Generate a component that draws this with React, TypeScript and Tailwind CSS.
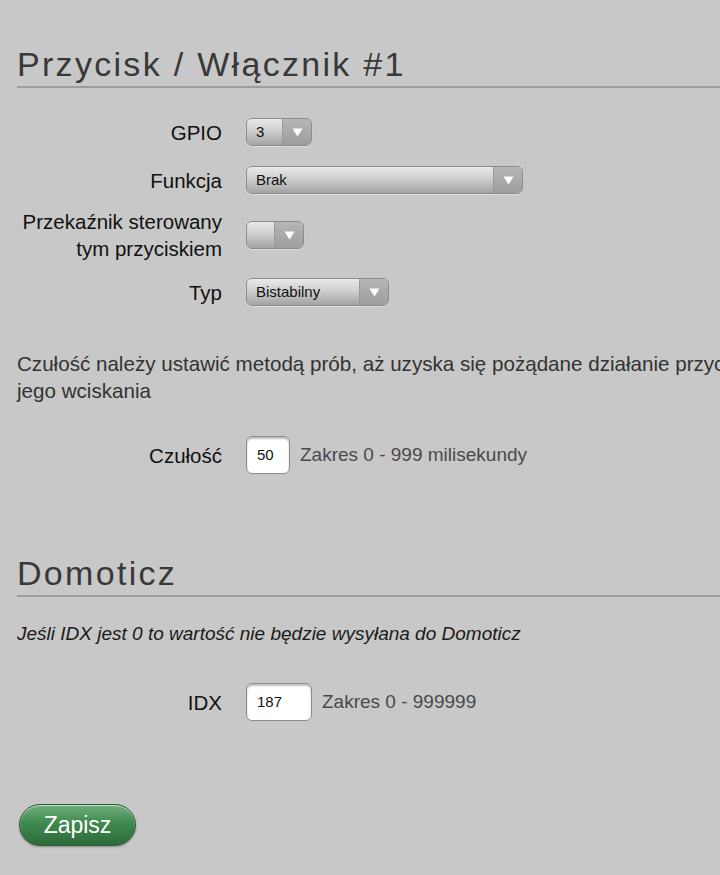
import type { ReactNode } from 'react'

const font = "font-['Liberation_Sans','Helvetica',Arial,sans-serif]"

function Heading({ children }: { children: ReactNode }) {
  return (
    <h2 className="border-b-2 border-[#9d9d9d] pb-[2px] text-[34px] leading-[40px] tracking-[2.3px] text-[#383838]">
      {children}
    </h2>
  )
}

function Arrow() {
  return (
    <svg width="11" height="9" viewBox="0 0 11 9">
      <polygon points="0.5,0.5 10.5,0.5 5.5,8.5" fill="#ffffff" />
    </svg>
  )
}

function Select({ width, value }: { width: string; value: string }) {
  return (
    <div
      className={`${width} flex h-[28px] overflow-hidden rounded-[6px] border border-[#8b8b8b] shadow-[0_1px_1px_rgba(255,255,255,0.4)]`}
    >
      <div className="flex flex-1 items-center bg-[linear-gradient(to_bottom,#eaeaea_0%,#cfcfcf_45%,#a3a3a3_100%)] pl-[9px] text-[15px] text-[#111]">
        {value}
      </div>
      <div className="flex w-[29px] items-center justify-center border-l border-[#9a9a9a] bg-[linear-gradient(to_bottom,#b6b6b6,#9d9d9d)]">
        <Arrow />
      </div>
    </div>
  )
}

function Input({ width, value }: { width: string; value: string }) {
  return (
    <div
      className={`${width} flex h-[38px] items-center rounded-[6px] border border-[#8d8d8d] bg-white pl-[10px] text-[15px] text-[#111] shadow-[inset_0_2px_2px_rgba(0,0,0,0.25)]`}
    >
      {value}
    </div>
  )
}

function Row({ label, children, className = '' }: { label: ReactNode; children: ReactNode; className?: string }) {
  return (
    <div className={`flex items-center ${className}`}>
      <div className="w-[205px] text-right text-[20.5px] leading-[27px] text-[#111]">{label}</div>
      <div className="ml-[24px] flex items-center">{children}</div>
    </div>
  )
}

export default function App() {
  return (
    <div className={`${font} h-[875px] w-[720px] overflow-hidden bg-[#c8c8c8] pl-[17px] pt-[44px]`}>
      <Heading>Przycisk / Włącznik #1</Heading>

      <Row label="GPIO" className="mt-[30px]">
        <Select width="w-[66px]" value="3" />
      </Row>
      <Row label="Funkcja" className="mt-[20px]">
        <Select width="w-[277px]" value="Brak" />
      </Row>
      <Row
        label={
          <>
            Przekaźnik sterowany
            <br />
            tym przyciskiem
          </>
        }
        className="mt-[14px]"
      >
        <Select width="w-[58px]" value="" />
      </Row>
      <Row label="Typ" className="mt-[16px]">
        <Select width="w-[143px]" value="Bistabilny" />
      </Row>

      <p className="mt-[44px] whitespace-nowrap text-[20.6px] leading-[27px] text-[#333]">
        Czułość należy ustawić metodą prób, aż uzyska się pożądane działanie przycisku podczas
        <br />
        jego wciskania
      </p>

      <Row label="Czułość" className="mt-[32px]">
        <Input width="w-[44px]" value="50" />
        <span className="ml-[10px] text-[19px] text-[#4a4a4a]">Zakres 0 - 999 milisekundy</span>
      </Row>

      <div className="mt-[79px]">
        <Heading>Domoticz</Heading>
      </div>

      <p className="mt-[25px] text-[19px] italic leading-[24px] text-[#1a1a1a]">
        Jeśli IDX jest 0 to wartość nie będzie wysyłana do Domoticz
      </p>

      <Row label="IDX" className="mt-[37px]">
        <Input width="w-[66px]" value="187" />
        <span className="ml-[10px] text-[19px] text-[#4a4a4a]">Zakres 0 - 999999</span>
      </Row>

      <button className="ml-[2px] mt-[83px] flex h-[42px] w-[117px] items-center justify-center rounded-full border border-[#2c6238] bg-[linear-gradient(to_bottom,#6fae7c_0%,#3f8a50_45%,#2c6a3a_100%)] text-[23px] text-white shadow-[inset_0_1px_1px_rgba(255,255,255,0.6),0_1px_2px_rgba(0,0,0,0.3)]">
        Zapisz
      </button>
    </div>
  )
}
